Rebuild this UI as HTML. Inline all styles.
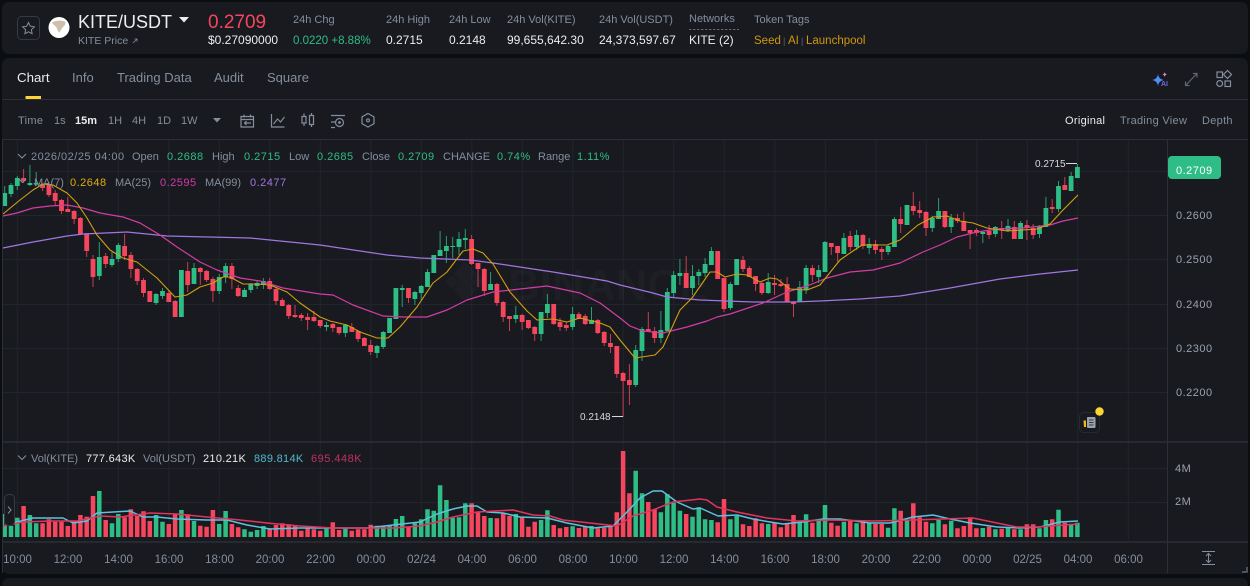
<!DOCTYPE html>
<html>
<head>
<meta charset="utf-8">
<style>
html,body{margin:0;padding:0;background:#0b0e11;width:1250px;height:586px;overflow:hidden}
svg{display:block;font-family:"Liberation Sans",sans-serif}
text{font-size:11px;fill:#848e9c}
.w{fill:#eaecef}.g{fill:#2ebd85}.t{font-size:13px}.ax{fill:#9aa2ae;letter-spacing:.5px}.tm{text-anchor:middle;font-size:11.5px;fill:#848e9c}
.v{font-size:12px;fill:#eaecef}
.n{letter-spacing:.5px}.s{letter-spacing:.3px}
</style>
</head>
<body>
<svg width="1250" height="586" viewBox="0 0 1250 586" xmlns="http://www.w3.org/2000/svg">
<rect x="2" y="2" width="1246" height="52" rx="7" fill="#181a20"/>
<rect x="2" y="58" width="1246" height="516" rx="7" fill="#181a20"/>
<rect x="2" y="578" width="1246" height="20" rx="7" fill="#181a20"/>

<!-- header -->
<rect x="17.5" y="16.5" width="22" height="23" rx="4" fill="none" stroke="#333b47"/>
<path d="M28.5 22.5l1.8 3.7 4.1.6-3 2.9.7 4-3.6-1.9-3.6 1.9.7-4-3-2.9 4.1-.6z" fill="none" stroke="#848e9c" stroke-width="1"/>
<circle cx="59" cy="27.5" r="10.5" fill="#fff"/>
<path d="M52 22.500c3-2 9-2.500 13-1 1 1.500 0 4-1.500 5-1.500 1.500-3 4-4 6-1.500-.5-2-3-3-5-1-1.500-3.500-3-4.500-5z" fill="#cdbfab"/>
<text x="78" y="28" style="font-size:18px;font-weight:500;fill:#eaecef">KITE/USDT</text>
<path d="M179 17h10l-5 5.500z" fill="#eaecef"/>
<text x="78" y="44" style="font-size:10.500px">KITE Price</text>
<path d="M133 43l4-4M134.500 39h2.500v2.500" stroke="#848e9c" stroke-width=".8" fill="none"/>
<text x="208" y="28" style="font-size:19px;fill:#f6465d">0.2709</text>
<text x="208" y="44" class="v">$0.27090000</text>

<text x="293" y="23">24h Chg</text>
<text x="293" y="44" class="g" style="font-size:11.5px">0.0220 +8.88%</text>
<text x="386" y="23">24h High</text>
<text x="386" y="44" class="v">0.2715</text>
<text x="449" y="23">24h Low</text>
<text x="449" y="44" class="v">0.2148</text>
<text x="507" y="23">24h Vol(KITE)</text>
<text x="507" y="44" class="v">99,655,642.30</text>
<text x="599" y="23">24h Vol(USDT)</text>
<text x="599" y="44" class="v">24,373,597.67</text>
<text x="689" y="22">Networks</text>
<path d="M689 29.500h50" stroke="#5e6673" stroke-dasharray="2.500 1.500"/>
<text x="689" y="44" class="v">KITE (2)</text>
<text x="754" y="23">Token Tags</text>
<text x="754" y="44" style="font-size:11.5px;fill:#d0980b">Seed</text>
<text x="783" y="44" style="font-size:9px;fill:#5e6673">|</text>
<text x="788" y="44" style="font-size:11.5px;fill:#d0980b">AI</text>
<text x="801" y="44" style="font-size:9px;fill:#5e6673">|</text>
<text x="806" y="44" style="font-size:11.5px;fill:#d0980b">Launchpool</text>

<!-- tabs -->
<text x="17" y="82" class="t" style="fill:#eaecef;font-weight:500;font-size:13.300px">Chart</text>
<text x="72" y="82" class="t">Info</text>
<text x="117" y="82" class="t">Trading Data</text>
<text x="214" y="82" class="t">Audit</text>
<text x="267" y="82" class="t">Square</text>
<rect x="25.500" y="96" width="15.500" height="3" fill="#fcd535"/>
<path d="M2 99.500H1248" stroke="#2b2f36"/>

<path d="M1158 74c.7 3.800 2.200 5.300 6 6-3.800.7-5.300 2.200-6 6-.7-3.800-2.200-5.300-6-6 3.800-.7 5.300-2.200 6-6z" fill="#4d8ff5"/>
<path d="M1164.700 72c.3 1.600.9 2.200 2.500 2.500-1.600.3-2.200.9-2.500 2.500-.3-1.600-.9-2.200-2.500-2.500 1.600-.3 2.200-.9 2.500-2.500z" fill="#e58ac0"/>
<text x="1161" y="86" style="font-size:7px;font-weight:bold;fill:#6b6fd8">AI</text>
<path d="M1185.500 85.500l11.500-12M1185.500 81.500v4h4M1193 73.500h4v4" stroke="#5e6673" stroke-width="1.200" fill="none"/>
<g fill="none" stroke="#848e9c" stroke-width="1.200">
<rect x="1217" y="72" width="5.500" height="5.500"/>
<path d="M1227.500 70.500l4 4-4 4-4-4z"/>
<circle cx="1219.700" cy="83.500" r="2.900"/>
<rect x="1225" y="81" width="5.500" height="5.500"/>
</g>

<!-- toolbar -->
<text x="18" y="124" class="s">Time</text>
<text x="54" y="124">1s</text>
<text x="75" y="124" style="fill:#eaecef;font-weight:bold">15m</text>
<text x="108" y="124">1H</text>
<text x="132" y="124">4H</text>
<text x="157" y="124">1D</text>
<text x="181" y="124">1W</text>
<path d="M213 118h8l-4 4.500z" fill="#848e9c"/>
<g fill="none" stroke="#848e9c" stroke-width="1.200">
<path d="M241 116.500h12.500v10.500h-12.500zM241 119.500h12.500M244 114.500v3M250.500 114.500v3M251 123h-6.500M246.500 121l-2 2 2 2"/>
<path d="M271.500 114v13h13M273.500 124l4-5 3 3 4-5"/>
<path d="M304 113.500v3M304 123v3M302 116.500h4v6.500h-4zM311.500 113v2.500M311.500 124.500v2.500M309.500 115.500h4v9h-4z"/>
<path d="M331 115.500h14M331 122h4M331 127.500h4"/><circle cx="339.500" cy="122.500" r="4"/><circle cx="339.500" cy="122.500" r=".8" fill="#848e9c"/>
<path d="M368 113.500l6 3.400v6.800l-6 3.400-6-3.400v-6.800z"/><circle cx="368" cy="120.300" r="1.500"/>
</g>
<text x="1065" y="124" class="w s">Original</text>
<text x="1120" y="124" class="s">Trading View</text>
<text x="1202" y="124" class="s">Depth</text>
<path d="M2 139.500H1248" stroke="#2b2f36"/>

<!-- grid -->
<path d="M3 171.500H1168M3 215.500H1168M3 259.500H1168M3 304.500H1168M3 348.500H1168M3 392.500H1168M3 468.500H1168M3 502.500H1168" stroke="#21252c"/>
<path d="M17.300 140V541M67.800 140V541M118.300 140V541M168.800 140V541M219.300 140V541M269.800 140V541M320.300 140V541M370.800 140V541M421.300 140V541M471.800 140V541M522.300 140V541M572.800 140V541M623.300 140V541M673.800 140V541M724.300 140V541M774.800 140V541M825.300 140V541M875.800 140V541M926.300 140V541M976.800 140V541M1027.300 140V541M1077.800 140V541M1128.300 140V541" stroke="#21252c"/>

<!-- watermark -->
<g fill="#ffffff" fill-opacity=".022">
<path d="M465 262l12 12-7 7-5-5-5 5-7-7zM445 282l7-7 7 7-7 7zM485 282l-7-7-7 7 7 7zM465 302l-12-12 7-7 5 5 5-5 7 7zM465 275l7 7-7 7-7-7z"/>
<text x="508" y="300" style="font-size:44px;font-weight:bold;fill:#ffffff;fill-opacity:.022">BINANCE</text>
</g>

<!-- volumes -->
<path stroke="#2ebd85" stroke-width="4.500" fill="none" d="M4.700 537V526M11 537V526M17.300 537V517.700M29.900 537V515M36.200 537V523.300M99.300 537V491M112 537V523.300M118.300 537V514M156.100 537V515M162.500 537V521.700M181.400 537V510M194 537V521M219.200 537V524M225.600 537V511M244.500 537V529.300M250.800 537V531.700M257.100 537V530M263.400 537V526M326.500 537V527.300M345.400 537V528.300M377 537V525.700M383.300 537V526M389.600 537V525.700M395.900 537V519M402.200 537V516M414.900 537V523.300M421.200 537V519.300M427.500 537V509.300M433.800 537V510.700M440.100 537V485.300M446.400 537V500M452.700 537V517.700M459 537V517.300M465.300 537V503.300M490.600 537V518M515.800 537V514M541.100 537V520M547.400 537V510.300M572.600 537V526.300M591.500 537V526M635.700 537V470.700M642 537V493.300M660.900 537V512.300M667.300 537V494.300M673.600 537V502.700M679.900 537V510.700M692.500 537V516.700M698.800 537V507.300M705.100 537V519.300M711.400 537V520M730.400 537V519.300M736.700 537V516M768.200 537V524M799.800 537V521.700M806.100 537V514.300M818.700 537V520.700M825 537V505M843.900 537V521.700M856.600 537V523.300M869.200 537V523.300M888.100 537V527.700M894.400 537V508.300M907 537V520M932.300 537V523.300M938.600 537V520M951.200 537V520.700M982.800 537V528M995.400 537V529.300M1008 537V527.300M1020.600 537V529.300M1039.500 537V528.300M1045.900 537V520M1058.500 537V509.700M1071.100 537V524M1077.400 537V522.700"/>
<rect x="2.700" y="514" width="1.300" height="23" fill="#2ebd85"/>
<path stroke="#f6465d" stroke-width="4.500" fill="none" d="M23.600 537V506M42.600 537V523.300M48.900 537V519.300M55.200 537V521.700M61.500 537V521.700M67.800 537V526M74.100 537V521M80.400 537V515M86.700 537V516.700M93 537V496M105.700 537V520M124.600 537V517.300M130.900 537V509.300M137.200 537V516M143.500 537V511.300M149.800 537V521M168.800 537V524M175.100 537V514.300M187.700 537V514.300M200.300 537V525.700M206.600 537V526.700M212.900 537V510M231.900 537V524M238.200 537V527.300M269.700 537V528.300M276 537V525M282.300 537V523.300M288.700 537V524.300M295 537V526M301.300 537V530.700M307.600 537V528.300M313.900 537V529.300M320.200 537V530.700M332.800 537V522.300M339.100 537V530M351.800 537V530.700M358.100 537V529.300M364.400 537V529.300M370.700 537V524.700M408.500 537V527.300M471.600 537V503.300M478 537V512.300M484.300 537V516M496.900 537V518.300M503.200 537V513.300M509.500 537V516M522.100 537V517.300M528.400 537V526.700M534.700 537V521.700M553.700 537V525M560 537V528.300M566.300 537V527M578.900 537V528M585.200 537V526.700M597.800 537V528.300M604.200 537V527.700M610.500 537V526M616.800 537V512.300M623.100 537V451M629.400 537V493.300M648.300 537V502M654.600 537V509.300M686.200 537V514M717.700 537V522.300M724 537V499M743 537V524.300M749.300 537V526M755.600 537V518.300M761.900 537V523.300M774.500 537V522.700M780.800 537V527.300M787.100 537V524M793.500 537V515M812.400 537V522.700M831.300 537V522.700M837.600 537V525.700M850.200 537V520.700M862.900 537V521M875.500 537V524M881.800 537V524M900.700 537V510.700M913.300 537V503.300M919.700 537V517.300M926 537V521.700M944.900 537V524.300M957.500 537V528.300M963.800 537V526M970.100 537V517.300M976.400 537V528.300M989.100 537V526.700M1001.700 537V528.700M1014.300 537V529.300M1026.900 537V524.300M1033.200 537V524.300M1052.200 537V519.300M1064.800 537V522.700"/>
<polyline fill="none" stroke="#5bc3dd" stroke-width="1.500" stroke-linejoin="round" points="3,526 17,522 33,518 63,518 73,523 87,521 97,513 113,512 130,511 143,517 157,517 177,519 207,520 227,520 247,525 270,529 300,528 333,528 367,528 393,525 420,522 437,514 453,509 467,506 477,506 487,512 503,513 520,517 547,518 567,523 593,528 613,526 627,512 640,498 653,491 662,491 677,502 693,509 700,508 718,516 737,515 753,519 770,522 783,524 803,522 823,519 840,519 870,523 890,523 913,517 933,515 950,519 970,523 997,527 1020,528 1040,527 1060,522 1078,521"/>
<polyline fill="none" stroke="#e0355f" stroke-width="1.500" stroke-linejoin="round" points="3,526 23,522 50,521 77,521 100,516 120,517 150,513 177,514 207,517 240,520 267,523 300,526 333,528 393,528 420,526 437,522 453,517 477,512 513,510 533,515 550,516 563,520 590,523 617,526 633,516 653,510 673,502 700,499 707,500 717,507 737,512 767,518 797,521 830,520 873,521 913,520 973,518 997,523 1017,527 1037,527 1078,524"/>

<!-- candles: wicks -->
<path stroke="#2ebd85" stroke-opacity=".8" stroke-width="1" fill="none" d="M4.700 186V206M11 183V197M17.300 176V190M29.900 165V186M36.200 172V186M99.300 242V280M112 252V267M118.300 243V262M156.100 293V305M162.500 288V299M181.400 270V317M194 263V284M219.200 274V294M225.600 263V283M244.500 288V297M250.800 283V293M257.100 280V289M263.400 278V289M326.500 322V331M345.400 324V337M377 345V358M383.300 331V349M389.600 318V333M395.900 288V319M402.200 285V307M414.900 291V305M421.200 285V300M427.500 269V287M433.800 255V273M440.100 231V256M446.400 236V263M452.700 237V258M459 232V255M465.300 229V249M490.600 272V290M515.800 306V323M541.100 312V341M547.400 294V318M572.600 307V330M591.500 307V324M635.700 345V387M642 327V361M660.900 311V343M667.300 288V331M673.600 271V297M679.900 259V285M692.500 265V295M698.800 269V285M705.100 258V277M711.400 247V265M730.400 282V310M736.700 259V285M768.200 273V294M799.800 281V302M806.100 265V294M818.700 265V283M825 241V272M843.900 233V254M856.600 230V250M869.200 238V254M888.100 245V255M894.400 217V247M907 205V225M932.300 216V232M938.600 198V219M951.200 214V233M982.800 231V243M995.400 226V237M1008 219V232M1020.600 221V239M1039.500 225V238M1045.900 197V227M1058.500 181V212M1071.100 172V191M1077.400 164V178"/>
<path stroke="#f6465d" stroke-opacity=".8" stroke-width="1" fill="none" d="M23.600 169V183M42.600 183V191M48.900 182V197M55.200 190V205M61.500 199V214M67.800 197V212M74.100 210V224M80.400 217V235M86.700 233V257M93 255V287M105.700 253V268M124.600 234V260M130.900 252V278M137.200 268V285M143.500 278V297M149.800 291V302M168.800 290V302M175.100 300V317M187.700 262V292M200.300 267V285M206.600 270V282M212.900 277V302M231.900 263V289M238.200 285V297M269.700 278V290M276 288V305M282.300 298V306M288.700 304V319M295 305V318M301.300 313V321M307.600 313V330M313.900 311V322M320.200 320V328M332.800 323V332M339.100 327V335M351.800 323V332M358.100 330V342M364.400 337V346M370.700 340V355M408.500 288V303M471.600 235V265M478 263V287M484.300 268V296M496.900 283V306M503.200 301V322M509.500 316V331M522.100 314V330M528.400 320V329M534.700 326V341M553.700 304V325M560 318V331M566.300 322V331M578.900 312V319M585.200 314V325M597.800 319V334M604.200 331V346M610.500 334V353M616.800 346V378M623.100 372V417M629.400 364V405M648.300 312V332M654.600 327V343M686.200 256V288M717.700 251V279M724 278V312M743 256V272M749.300 266V277M755.600 276V291M761.900 282V295M774.500 275V295M780.800 279V287M787.100 277V302M793.500 301V317M812.400 265V282M831.300 243V255M837.600 246V262M850.200 231V251M862.900 234V249M875.500 240V254M881.800 247V260M900.700 207V233M913.300 192V215M919.700 201V218M926 211V236M944.900 211V228M957.500 214V223M963.800 212V231M970.100 230V249M976.400 228V236M989.100 225V239M1001.700 221V239M1014.300 221V239M1026.900 220V240M1033.200 224V239M1052.200 199V213M1064.800 177V190"/>
<!-- candles: bodies -->
<path stroke="#2ebd85" stroke-width="4.800" fill="none" d="M4.700 193V206M11 185V194M17.300 178V186M29.900 183V185M36.200 183V184.500M99.300 257V276M112 259V265M118.300 245V259M156.100 294V303M162.500 291V296M181.400 270V317M194 268V284M219.200 277V291M225.600 266V277M244.500 290V297M250.800 284V290M257.100 283V286M263.400 281V285M326.500 325V327M345.400 325V333M377 346V353M383.300 332V347M389.600 318V333M395.900 288V319M402.200 288V290M414.900 292V299M421.200 286V293M427.500 272V287M433.800 255V273M440.100 250V256M446.400 246V251M452.700 246V247M459 239V247M465.300 238V240M490.600 284V290M515.800 315V319M541.100 312V334M547.400 304V313M572.600 314V327M591.500 320V324M635.700 350V385M642 329V351M660.900 330V338M667.300 292V331M673.600 275V293M679.900 273V276M692.500 276V288M698.800 272V276M705.100 264V273M711.400 251V265M730.400 284V308M736.700 259V285M768.200 282V293M799.800 287V302M806.100 268V290M818.700 270V277M825 242V272M843.900 238V254M856.600 235V247M869.200 244V248M888.100 246V252M894.400 219V247M907 205V225M932.300 218V228M938.600 211V219M951.200 218V227M982.800 232V234M995.400 227V234M1008 226V231M1020.600 223V239M1039.500 226V234M1045.900 208V227M1058.500 186V209M1071.100 176V191M1077.400 167V178"/>
<path stroke="#f6465d" stroke-width="4.800" fill="none" d="M23.600 178V181M42.600 184V188M48.900 184V195M55.200 193V201M61.500 200V211M67.800 209V212M74.100 211V219M80.400 218V234M86.700 234V251M93 259V277M105.700 256V264M124.600 246V256M130.900 255V269M137.200 269V281M143.500 280V293M149.800 291V302M168.800 293V302M175.100 301V317M187.700 271V285M200.300 268V272M206.600 271V280M212.900 279V291M231.900 266V279M238.200 288V296M269.700 281V289M276 289V301M282.300 300V306M288.700 305V316M295 315V317M301.300 315V318M307.600 317V320M313.900 317V321M320.200 320V326M332.800 324V328M339.100 327V333M351.800 327V332M358.100 331V339M364.400 338V346M370.700 345V352M408.500 288V298M471.600 239V264M478 263V269M484.300 269V291M496.900 284V303M503.200 302V317M509.500 316V319M522.100 315V322M528.400 320V328M534.700 327V334M553.700 304V324M560 322V327M566.300 325V328M578.900 314V319M585.200 316V324M597.800 320V333M604.200 332V343M610.500 343V347M616.800 346V374M623.100 373V381M629.400 380V385M648.300 329V331M654.600 331V338M686.200 273V288M717.700 251V279M724 278V309M743 260V269M749.300 268V277M755.600 276V284M761.900 283V293M774.500 283V285M780.800 284V286M787.100 284V302M793.500 302V304M812.400 268V275M831.300 243V247M837.600 246V253M850.200 236V247M862.900 235V246M875.500 244V250M881.800 249V252M900.700 219V224M913.300 206V211M919.700 210V213M926 212V228M944.900 211V227M957.500 218V221M963.800 221V231M970.100 230V233M976.400 230V233M989.100 231V235M1001.700 228V230M1014.300 227V239M1026.900 225V228M1033.200 228V235M1052.200 207V209M1064.800 185V190"/>

<!-- MA lines -->
<polyline fill="none" stroke="#a276e0" stroke-width="1.200" stroke-linejoin="round" points="3,248 33,242 67,236 83,234 127,232 167,236 250,238 320,245 387,255 420,258 470,260 493,263 553,272 607,281 620,285 653,293 667,297 700,300 753,302 793,302 820,301 860,299 900,296 950,288 1000,279 1040,274 1078,270"/>
<polyline fill="none" stroke="#d43ca5" stroke-width="1.200" stroke-linejoin="round" points="3,216 17,213 33,208 50,206 67,205 83,208 100,213 123,217 140,223 160,235 177,247 200,262 217,270 240,278 260,281 283,288 320,294 333,295 353,305 383,316 403,317 427,317 447,310 467,300 493,292 520,289 547,286 580,293 600,303 620,318 630,326 643,331 663,333 687,327 707,321 717,317 730,314 763,303 787,292 807,286 827,278 850,272 873,270 900,263 923,252 940,245 957,237 977,232 997,229 1023,228 1050,225 1063,221 1078,218"/>
<polyline fill="none" stroke="#d2a00e" stroke-width="1.100" stroke-linejoin="round" points="3,214 20,200 33,190 43,184 53,185 67,193 77,203 87,218 97,235 110,250 123,258 137,262 157,278 175,297 187,295 200,287 213,283 223,277 230,277 243,284 257,284 270,285 287,292 300,303 320,317 330,321 347,325 360,332 377,338 388,338 400,327 417,307 433,283 447,272 463,251 473,249 483,253 493,264 510,292 527,311 537,320 553,319 567,322 580,318 600,323 610,327 620,340 635,358 655,355 663,347 680,310 692,298 710,272 717,272 725,277 737,274 747,275 760,282 770,278 777,279 790,289 807,290 820,285 840,260 850,253 862,245 887,245 900,240 918,225 933,217 947,216 960,221 973,223 987,228 1007,231 1037,229 1050,224 1063,210 1078,195"/>

<!-- frame lines -->
<path d="M2.500 140V573" stroke="#2b2f36"/>
<path d="M1167.500 140V573" stroke="#2b2f36"/>
<path d="M2 442H1248M2 542H1248" stroke="#2b2f36" stroke-width="1.500"/>

<!-- legend -->
<path d="M18 154l4 4 4-4" stroke="#848e9c" fill="none" stroke-width="1"/>
<text x="31" y="160" class="n">2026/02/25 04:00</text>
<text x="132" y="160">Open</text><text x="167" y="160" class="g n">0.2688</text>
<text x="212" y="160">High</text><text x="244" y="160" class="g n">0.2715</text>
<text x="289" y="160">Low</text><text x="317" y="160" class="g n">0.2685</text>
<text x="362" y="160">Close</text><text x="398" y="160" class="g n">0.2709</text>
<text x="443" y="160">CHANGE</text><text x="497" y="160" class="g n">0.74%</text>
<text x="538" y="160">Range</text><text x="577" y="160" class="g n">1.11%</text>
<path d="M19 179l3.500 3.500 3.500-3.500" stroke="#848e9c" fill="none" stroke-width="1"/>
<text x="34" y="186">MA(7)</text><text x="70" y="186" class="n" style="fill:#e2ac0d">0.2648</text>
<text x="115" y="186">MA(25)</text><text x="160" y="186" class="n" style="fill:#d43ca5">0.2595</text>
<text x="205" y="186">MA(99)</text><text x="250" y="186" class="n" style="fill:#a276e0">0.2477</text>

<!-- price axis -->
<text x="1176" y="219" class="ax">0.2600</text>
<text x="1176" y="263" class="ax">0.2500</text>
<text x="1176" y="308" class="ax">0.2400</text>
<text x="1176" y="352" class="ax">0.2300</text>
<text x="1176" y="396" class="ax">0.2200</text>
<rect x="1168" y="156" width="53" height="23" rx="4" fill="#2ebd85"/>
<text x="1176" y="174" class="n" style="fill:#fff">0.2709</text>

<text x="1035" y="167" style="font-size:10px;fill:#d5d8dc">0.2715</text>
<path d="M1066 163.500h11" stroke="#d5d8dc"/>
<text x="580" y="420" style="font-size:10px;fill:#d5d8dc">0.2148</text>
<path d="M612 416.500h11" stroke="#d5d8dc"/>

<!-- doc marker -->
<rect x="1079.500" y="412.500" width="20" height="20" rx="4" fill="#181a20" stroke="#262a31"/>
<rect x="1087" y="417" width="8.500" height="11" rx="1" fill="#9aa2ae"/>
<path d="M1089 420h4.500M1089 422.500h4.500M1089 425h4.500" stroke="#181a20" stroke-width=".8"/>
<path d="M1083.500 420.500h2.500v6.500h-2z" fill="#f0b90b"/>
<circle cx="1099.500" cy="411.500" r="4.200" fill="#fcd535"/>

<!-- vol legend -->
<path d="M18 455.500l4 4 4-4" stroke="#848e9c" fill="none" stroke-width="1"/>
<text x="31" y="462">Vol(KITE)</text><text x="86" y="462" class="w s">777.643K</text>
<text x="143" y="462">Vol(USDT)</text><text x="203" y="462" class="w s">210.21K</text>
<text x="254" y="462" class="s" style="fill:#55b6cc">889.814K</text>
<text x="311" y="462" class="n" style="fill:#c4305c">695.448K</text>
<text x="1175" y="472" class="ax">4M</text>
<text x="1175" y="505" class="ax">2M</text>

<!-- collapse tab -->
<rect x="4.500" y="494.500" width="10" height="31" rx="4" fill="#181a20" stroke="#333b47"/>
<path d="M8 506.500l3 3.500-3 3.500" stroke="#848e9c" fill="none"/>

<!-- time axis -->
<text x="17.500" y="563" class="tm">10:00</text><text x="68" y="563" class="tm">12:00</text><text x="118.500" y="563" class="tm">14:00</text><text x="169" y="563" class="tm">16:00</text><text x="219.500" y="563" class="tm">18:00</text><text x="270" y="563" class="tm">20:00</text><text x="320.500" y="563" class="tm">22:00</text><text x="371" y="563" class="tm">00:00</text><text x="421.500" y="563" class="tm">02/24</text><text x="472" y="563" class="tm">04:00</text><text x="522.500" y="563" class="tm">06:00</text><text x="573" y="563" class="tm">08:00</text><text x="623.500" y="563" class="tm">10:00</text><text x="674" y="563" class="tm">12:00</text><text x="724.500" y="563" class="tm">14:00</text><text x="775" y="563" class="tm">16:00</text><text x="825.500" y="563" class="tm">18:00</text><text x="876" y="563" class="tm">20:00</text><text x="926.500" y="563" class="tm">22:00</text><text x="977" y="563" class="tm">00:00</text><text x="1027.500" y="563" class="tm">02/25</text><text x="1078" y="563" class="tm">04:00</text><text x="1128.500" y="563" class="tm">06:00</text>

<path d="M1202 551.500h13M1202 564.500h13M1208.500 553.500v9M1206 556l2.500-2.500 2.500 2.500M1206 560l2.500 2.500 2.500-2.500" stroke="#848e9c" fill="none"/>
<path d="M1247 567v5h-5" stroke="#5e6673" stroke-width="1.500" fill="none"/>
</svg>
</body>
</html>
